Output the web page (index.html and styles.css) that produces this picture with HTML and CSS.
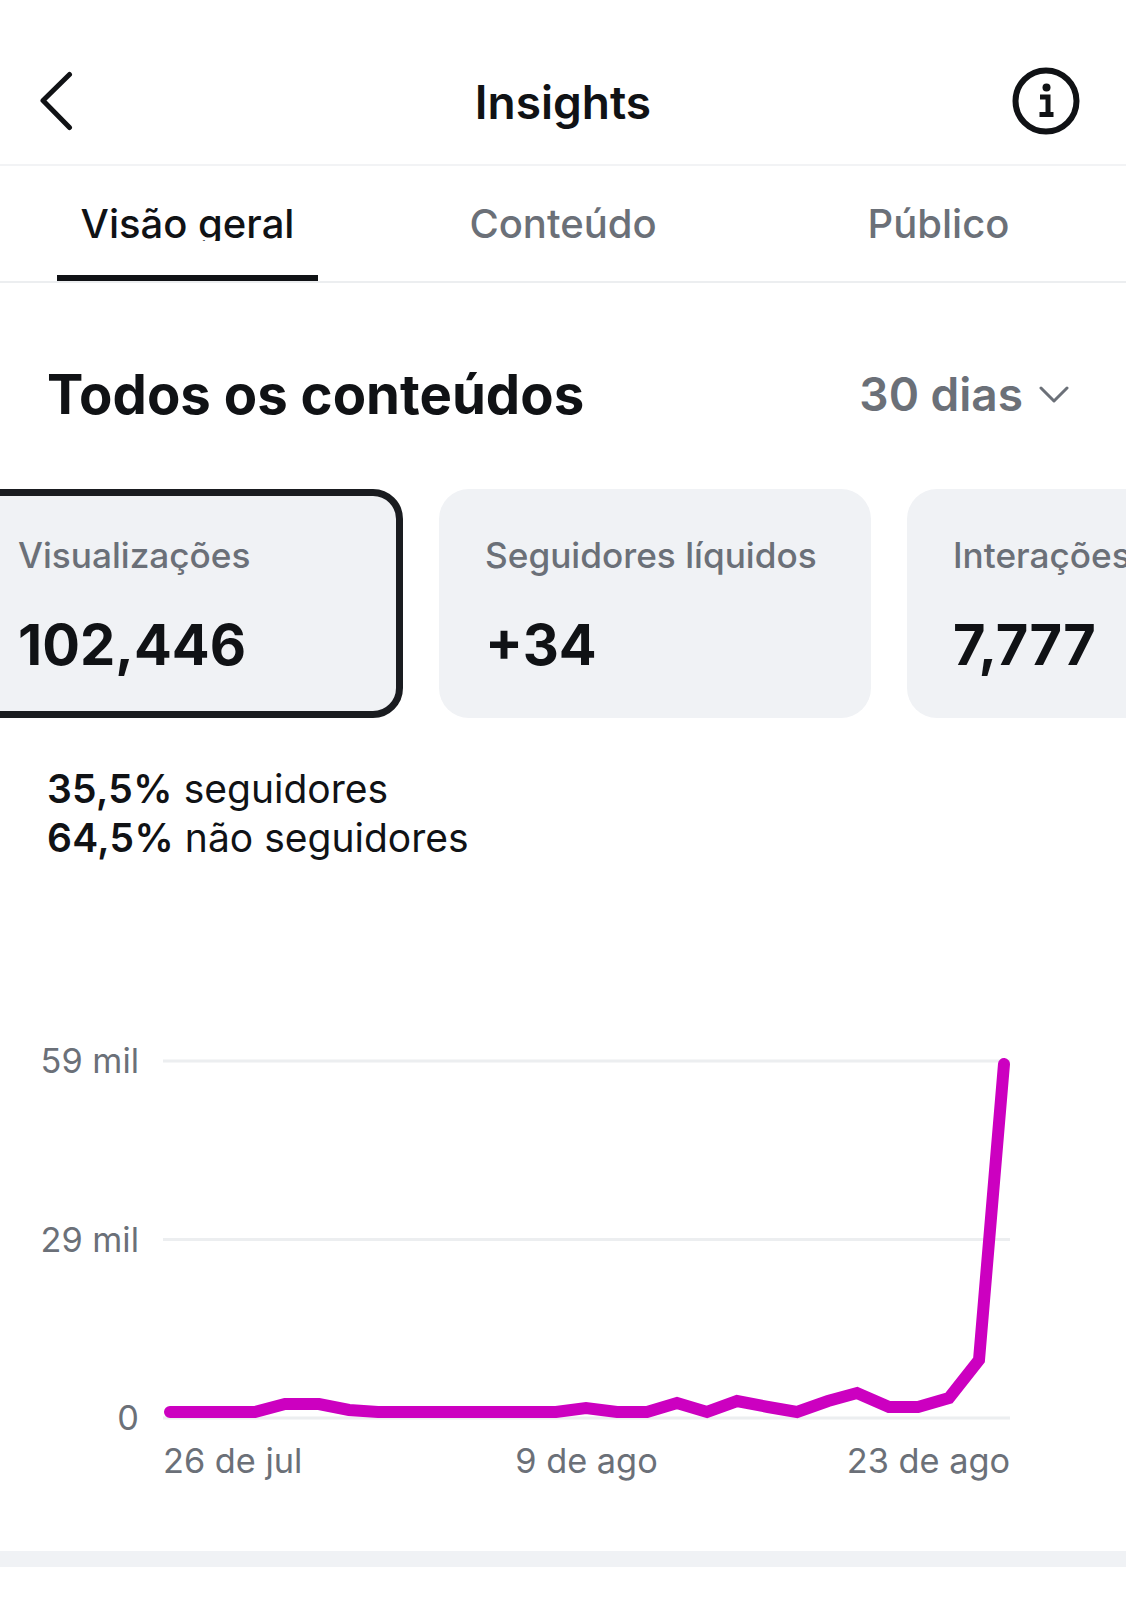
FILE: index.html
```html
<!DOCTYPE html>
<html lang="pt">
<head>
<meta charset="utf-8">
<title>Insights</title>
<link rel="stylesheet" href="styles.css">
</head>
<body>
<div class="page">
  <header class="topbar">
    <svg class="back" viewBox="0 0 34 62" width="34" height="62" aria-hidden="true"><path d="M30.500 4.500 4 30.500 30.500 57.500" fill="none" stroke="#101215" stroke-width="5" stroke-linecap="round" stroke-linejoin="round"/></svg>
    <h1 class="title">Insights</h1>
    <svg class="info" viewBox="0 0 68 68" width="68" height="68" aria-hidden="true">
      <circle cx="34" cy="34" r="30.500" fill="none" stroke="#101215" stroke-width="6"/>
      <circle cx="34.500" cy="20.500" r="4" fill="#101215"/>
      <path d="M28 30h8v17M27.500 47.500h14" fill="none" stroke="#101215" stroke-width="5"/>
    </svg>
  </header>
  <nav class="tabs">
    <div class="tab active"><span class="tab-label">Visão geral</span></div>
    <div class="tab"><span class="tab-label">Conteúdo</span></div>
    <div class="tab"><span class="tab-label">Público</span></div>
  </nav>
  <section class="heading-row">
    <h2 class="heading">Todos os conteúdos</h2>
    <div class="range">30 dias
      <svg class="caret" viewBox="0 0 30 18" width="30" height="18" aria-hidden="true"><path d="M2 2l13 13L28 2" fill="none" stroke="#6b7078" stroke-width="3" stroke-linecap="round" stroke-linejoin="round"/></svg>
    </div>
  </section>
  <section class="cards">
    <article class="card selected"><div class="card-label">Visualizações</div><div class="card-value">102,446</div></article>
    <article class="card"><div class="card-label">Seguidores líquidos</div><div class="card-value">+34</div></article>
    <article class="card"><div class="card-label">Interações</div><div class="card-value">7,777</div></article>
  </section>
  <section class="split">
    <p class="split-line"><b>35,5%</b> seguidores</p>
    <p class="split-line"><b>64,5%</b> não seguidores</p>
  </section>
  <section class="chart">
    <div class="y-axis">
      <span>59 mil</span>
      <span>29 mil</span>
      <span>0</span>
    </div>
    <svg class="plot" viewBox="0 0 963 380" width="963" height="380" aria-hidden="true">
      <g stroke="#eceef0" stroke-width="3">
        <path d="M0 11H847"/>
        <path d="M0 189.500H847"/>
        <path d="M0 368H847"/>
      </g>
      <polyline fill="none" stroke="#cc00c0" stroke-width="12" stroke-linecap="round" stroke-linejoin="miter"
        points="7,362 92,362 122,354 156,354 186,360 215,362 393,362 423,358 454,362 484,362 514,353 544,362 574,351 605,357 634,362 665,351 694,343 726,357 755,357 786,348 816,310 841,14"/>
    </svg>
    <div class="x-axis">
      <span>26 de jul</span>
      <span class="x-mid">9 de ago</span>
      <span class="x-end">23 de ago</span>
    </div>
  </section>
  <div class="band"></div>
</div>
</body>
</html>
```
FILE: styles.css
```css
* { box-sizing: border-box; }
html, body { margin: 0; background: #fff; }
body { font-family: Inter, "Liberation Sans", sans-serif; color: #101215; }
.page { width: 1126px; height: 1600px; overflow: hidden; }

.topbar {
  height: 166px;
  border-bottom: 2px solid #f2f3f5;
  display: grid;
  grid-template-columns: 1fr auto 1fr;
  align-items: center;
  padding: 37px 46px 0;
}
.back { margin-left: -7px; }
.info { justify-self: end; }
.title { margin: 0; padding-top: 3px; font-size: 46px; font-weight: 600; line-height: 54px; }

.tabs {
  height: 117px;
  border-bottom: 2px solid #eceef0;
  display: grid;
  grid-template-columns: 375px 376px 375px;
}
.tab {
  display: flex;
  justify-content: center;
  padding-top: 36px;
  font-size: 40px;
  font-weight: 500;
  color: #6b7078;
}
.tab-label { display: block; line-height: 44px; }
.tab.active { color: #101215; position: relative; }
.tab.active .tab-label { height: 39px; overflow: hidden; }
.tab.active::after {
  content: "";
  position: absolute;
  left: 57px;
  width: 261px;
  top: 109px;
  height: 6px;
  background: #101215;
}

.heading-row {
  display: flex;
  justify-content: space-between;
  align-items: center;
  padding: 79px 57px 63px 47px;
}
.heading { margin: 0; font-size: 54.500px; font-weight: 700; line-height: 64px; }
.range { display: flex; align-items: center; gap: 16px; font-size: 46px; font-weight: 600; color: #6b7078; line-height: 62px; }
.caret { margin-top: 2px; }

.cards { display: flex; gap: 36px; margin-left: -29px; }
.card {
  flex: 0 0 432px;
  height: 229px;
  background: #f0f2f5;
  border-radius: 30px;
  padding: 46px 0 0 46px;
}
.card.selected { border: 7px solid #1a1c20; padding: 39px 0 0 40px; }
.card-label { font-size: 35.200px; font-weight: 500; color: #6b7078; line-height: 40px; white-space: nowrap; }
.card-value { margin-top: 38px; font-size: 56px; font-weight: 700; line-height: 64px; }

.split { padding: 46px 0 0 47px; }
.split-line { margin: 0; font-size: 39px; line-height: 49px; }
.split-line b { font-weight: 600; letter-spacing: 0.300px; }

.chart {
  margin-top: 188px;
  display: grid;
  grid-template-columns: 163px 963px;
  grid-template-rows: 380px auto;
}
.y-axis {
  display: flex;
  flex-direction: column;
  justify-content: space-between;
  align-items: flex-end;
  padding: 0 24px 0 0;
  height: 397px;
  margin-top: -9px;
  font-size: 34.300px;
  line-height: 40px;
  color: #6b7078;
}
.plot { display: block; overflow: visible; }
.x-axis {
  grid-column: 2;
  width: 847px;
  display: grid;
  grid-template-columns: 1fr 1fr 1fr;
  padding-top: 11px;
  font-size: 34.300px;
  line-height: 40px;
  color: #6b7078;
  white-space: nowrap;
}
.x-mid { text-align: center; }
.x-end { text-align: right; }
.band { height: 16px; margin-top: 70px; background: #f0f2f5; }
```
